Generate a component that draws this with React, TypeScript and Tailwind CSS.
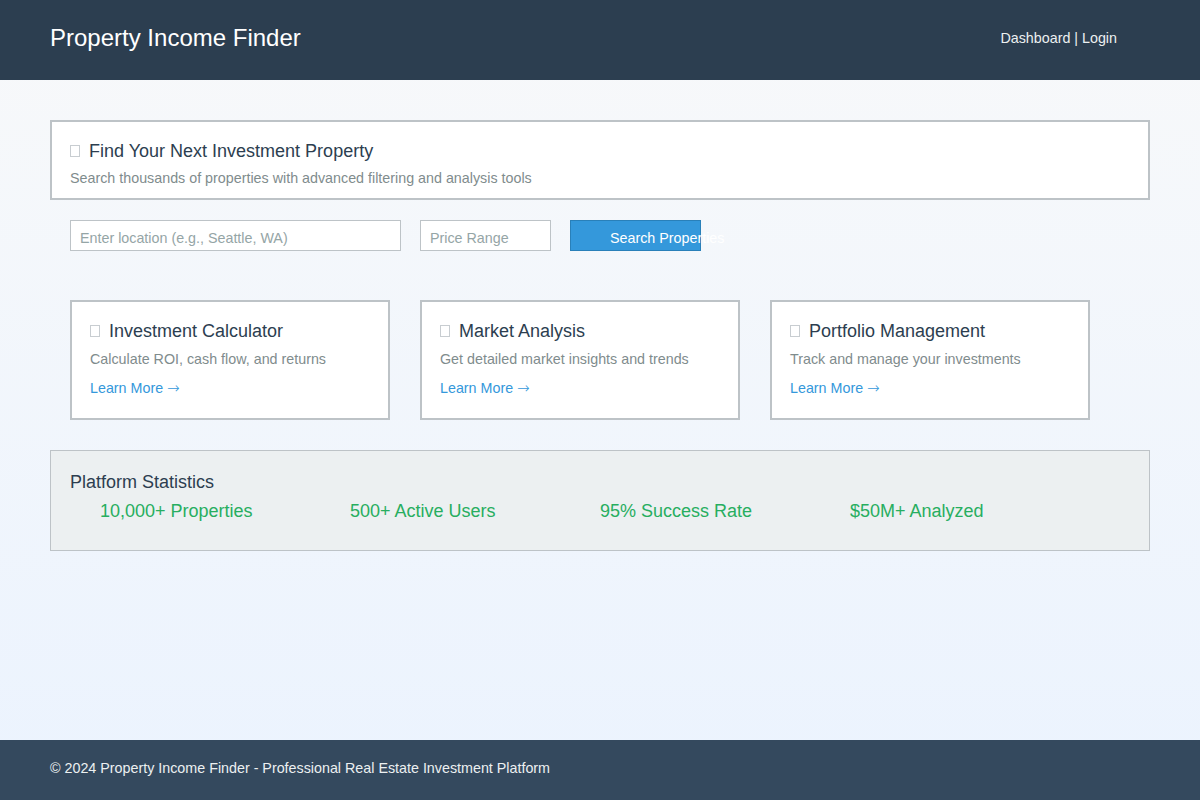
import React from 'react'

const Tofu: React.FC = () => (
  <span className="inline-block w-[10px] h-[12px] border border-[#c8cdd1] mr-[9px] shrink-0" />
)

const features = [
  { title: 'Investment Calculator', desc: 'Calculate ROI, cash flow, and returns' },
  { title: 'Market Analysis', desc: 'Get detailed market insights and trends' },
  { title: 'Portfolio Management', desc: 'Track and manage your investments' },
]

const stats = ['10,000+ Properties', '500+ Active Users', '95% Success Rate', '$50M+ Analyzed']

const App: React.FC = () => {
  return (
    <div className="min-h-screen flex flex-col font-['Liberation_Sans',Arial,sans-serif] bg-gradient-to-b from-[#f8f9fa] to-[#ebf3fe]">
      {/* Header */}
      <header className="h-[80px] bg-[#2c3e50] flex items-center justify-between pl-[50px] pr-[83px] shrink-0">
        <h1 className="text-[24px] text-white leading-none -mt-[4px]">Property Income Finder</h1>
        <nav className="text-[14.3px] text-[#ecf0f1] -mt-[2px]">Dashboard | Login</nav>
      </header>

      <main className="flex-1 px-[50px]">
        {/* Hero search box */}
        <div className="mt-[40px] h-[80px] bg-white border-2 border-[#bdc3c7] pl-[18px] pt-[18px]">
          <div className="flex items-center text-[18px] text-[#2c3e50] leading-[22px]">
            <Tofu />
            Find Your Next Investment Property
          </div>
          <p className="mt-[8px] text-[14.3px] text-[#7f8c8d] leading-[16px]">
            Search thousands of properties with advanced filtering and analysis tools
          </p>
        </div>

        {/* Search controls */}
        <div className="mt-[20px] ml-[20px] flex gap-[19px] h-[31px]">
          <div className="w-[331px] border border-[#bdc3c7] bg-white flex items-center pl-[9px] pt-[6px] text-[14.3px] text-[#95a5a6]">
            Enter location (e.g., Seattle, WA)
          </div>
          <div className="w-[131px] border border-[#bdc3c7] bg-white flex items-center pl-[9px] pt-[6px] text-[14.3px] text-[#95a5a6]">
            Price Range
          </div>
          <button className="w-[131px] bg-[#3498db] border border-[#2980b9] flex items-center pl-[39px] pt-[6px] text-[14.3px] text-white whitespace-nowrap overflow-visible">
            Search Properties
          </button>
        </div>

        {/* Feature cards */}
        <div className="mt-[49px] ml-[20px] flex gap-[30px]">
          {features.map((f) => (
            <div key={f.title} className="w-[320px] h-[120px] bg-white border-2 border-[#bdc3c7] pl-[18px] pt-[18px]">
              <div className="flex items-center text-[18px] text-[#2c3e50] leading-[22px]">
                <Tofu />
                {f.title}
              </div>
              <p className="mt-[9px] text-[14.3px] text-[#7f8c8d] leading-[16px]">{f.desc}</p>
              <a className="block mt-[13px] text-[14.3px] text-[#3498db] leading-[16px]">
                Learn More{' '}
                <span className="font-['DejaVu_Sans',sans-serif] font-extralight text-[15px]">→</span>
              </a>
            </div>
          ))}
        </div>

        {/* Platform statistics */}
        <div className="mt-[30px] h-[101px] bg-[#ecf0f1] border border-[#bdc3c7] pl-[19px] pt-[21px]">
          <h2 className="text-[18px] text-[#2c3e50] leading-[20px]">Platform Statistics</h2>
          <div className="mt-[8px] ml-[30px] flex">
            {stats.map((s) => (
              <div key={s} className="w-[250px] text-[18px] text-[#27ae60] leading-[22px]">
                {s}
              </div>
            ))}
          </div>
        </div>
      </main>

      {/* Footer */}
      <footer className="h-[60px] bg-[#34495e] flex items-center pl-[50px] shrink-0">
        <p className="text-[14.3px] text-[#ecf0f1] -mt-[2px]">
          © 2024 Property Income Finder - Professional Real Estate Investment Platform
        </p>
      </footer>
    </div>
  )
}

export default App
